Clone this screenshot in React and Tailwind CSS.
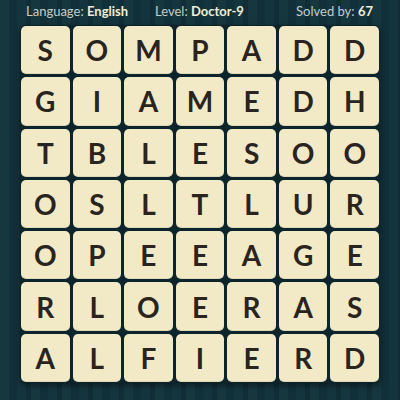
import React from "react";

const rows = [
  "SOMPADD",
  "GIAMEDH",
  "TBLESOO",
  "OSLTLUR",
  "OPEEAGE",
  "RLOERAS",
  "ALFIERD",
];

export default function App() {
  return (
    <div className="w-[400px] h-[400px] overflow-hidden bg-[#14333c] bg-[repeating-linear-gradient(90deg,#17373f_0px,#17373f_9px,#123039_9px,#123039_17px,#15353e_17px,#15353e_26px,#112e37_26px,#112e37_31px)] flex flex-col" style={{ fontFamily: "Lato, 'Open Sans', sans-serif" }}>
      <div className="h-[25px] grid grid-cols-3 items-center px-[26px] pr-[27px] text-[13px] text-[#c3ccc7] pb-[2px]">
        <div className="text-left whitespace-nowrap">Language: <span className="font-bold text-[#f1ecd6]">English</span></div>
        <div className="text-center whitespace-nowrap">Level: <span className="font-bold text-[#f1ecd6]">Doctor-9</span></div>
        <div className="text-right whitespace-nowrap">Solved by: <span className="font-bold text-[#f1ecd6]">67</span></div>
      </div>
      <div className="ml-[20px] w-[360px] h-[358px] bg-[#0c252d] rounded-[6px] p-[1px] shadow-[0_2px_6px_rgba(0,0,0,0.5)]">
        <div className="grid grid-cols-7 grid-rows-7 gap-[3px] w-full h-full">
          {rows.flatMap((r, i) =>
            r.split("").map((ch, j) => (
              <div
                key={i + "-" + j}
                className="bg-[#f2eac6] rounded-[5px] flex items-center justify-center text-[28px] font-bold text-[#2a2420] leading-none shadow-[inset_0_-1px_0_rgba(0,0,0,0.08)]"
              >
                {ch}
              </div>
            ))
          )}
        </div>
      </div>
    </div>
  );
}
